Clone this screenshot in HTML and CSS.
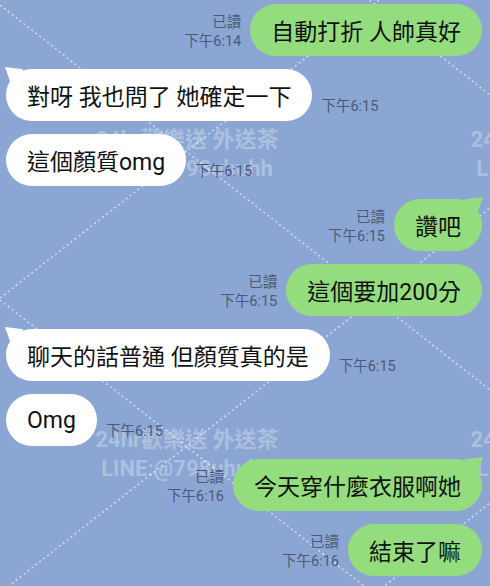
FILE: index.html
```html
<!DOCTYPE html>
<html>
<head>
    <title>LINE chat</title>
    <link rel="stylesheet" href="styles.css">
</head>
<body>
    <div class="chat">
        <!-- wallpaper: dotted diamond grid + watermark -->
        <svg class="backdrop" width="490" height="586" viewBox="0 0 490 586">
            <g class="grid">
                <line x1="0" y1="-290" x2="490" y2="95"/>
                <line x1="0" y1="5" x2="490" y2="390"/>
                <line x1="0" y1="300" x2="490" y2="685"/>
                <line x1="0" y1="298" x2="490" y2="-87"/>
                <line x1="0" y1="593" x2="490" y2="208"/>
                <line x1="0" y1="888" x2="490" y2="503"/>
            </g>
            <g class="mark">
                <text x="187" y="147">24hr歡樂送 外送茶</text>
                <text x="187" y="176">LINE:@798uhuhh</text>
                <text x="562" y="147">24hr歡樂送 外送茶</text>
                <text x="562" y="176">LINE:@798uhuhh</text>
                <text x="187" y="447">24hr歡樂送 外送茶</text>
                <text x="187" y="476">LINE:@798uhuhh</text>
                <text x="562" y="447">24hr歡樂送 外送茶</text>
                <text x="562" y="476">LINE:@798uhuhh</text>
            </g>
        </svg>

        <div class="row out">
            <div class="meta">已讀<br>下午6:14</div>
            <div class="bubble">自動打折 人帥真好</div>
        </div>

        <div class="row in">
            <div class="bubble tail">對呀 我也問了 她確定一下</div>
            <div class="meta">下午6:15</div>
        </div>

        <div class="row in">
            <div class="bubble">這個顏質omg</div>
            <div class="meta">下午6:15</div>
        </div>

        <div class="row out">
            <div class="meta">已讀<br>下午6:15</div>
            <div class="bubble tail">讚吧</div>
        </div>

        <div class="row out">
            <div class="meta">已讀<br>下午6:15</div>
            <div class="bubble">這個要加200分</div>
        </div>

        <div class="row in">
            <div class="bubble tail">聊天的話普通 但顏質真的是</div>
            <div class="meta">下午6:15</div>
        </div>

        <div class="row in">
            <div class="bubble">Omg</div>
            <div class="meta">下午6:15</div>
        </div>

        <div class="row out">
            <div class="meta">已讀<br>下午6:16</div>
            <div class="bubble tail">今天穿什麼衣服啊她</div>
        </div>

        <div class="row out">
            <div class="meta">已讀<br>下午6:16</div>
            <div class="bubble">結束了嘛</div>
        </div>
    </div>
</body>
</html>
```

FILE: styles.css
```css
body {
    margin: 0;
    background-color: #8ba6d3;
    font-family: Roboto, "Noto Sans CJK TC", sans-serif;
}

.chat {
    position: relative;
    height: 586px;
    box-sizing: border-box;
    padding: 4px 8px 0 6px;
    display: flex;
    flex-direction: column;
    gap: 13px;
    overflow: hidden;
}

.backdrop {
    position: absolute;
    top: 0;
    left: 0;
    z-index: 0;
}

.grid line {
    stroke: #ffffff;
    stroke-opacity: 0.6;
    stroke-width: 1.5;
    stroke-dasharray: 2 3;
}

.mark text {
    fill: #ffffff;
    fill-opacity: 0.3;
    font-family: Roboto, "Noto Sans CJK TC", sans-serif;
    font-size: 22px;
    font-weight: bold;
    text-anchor: middle;
}

.row {
    position: relative;
    z-index: 1;
    display: flex;
    align-items: flex-end;
    gap: 9px;
}

.row.out {
    justify-content: flex-end;
}

.bubble {
    position: relative;
    height: 52px;
    padding: 0 21px;
    border-radius: 26px;
    display: flex;
    align-items: center;
    font-size: 23px;
    color: #111111;
    white-space: nowrap;
}

.in .bubble {
    background-color: #ffffff;
}

.out .bubble {
    background-color: #93dd7f;
}

/* little horn on the first bubble of a group */
.bubble.tail::before {
    content: "";
    position: absolute;
    top: -2px;
    width: 18px;
    height: 18px;
    background-color: inherit;
}

.in .bubble.tail::before {
    left: -1px;
    clip-path: polygon(0 0, 100% 12%, 100% 100%, 35% 100%);
}

.out .bubble.tail::before {
    right: -1px;
    clip-path: polygon(100% 0, 0 12%, 0 100%, 65% 100%);
}

.meta {
    font-size: 14.5px;
    line-height: 19px;
    color: #4b5a78;
    text-align: right;
    padding-bottom: 5px;
    white-space: nowrap;
}
```
